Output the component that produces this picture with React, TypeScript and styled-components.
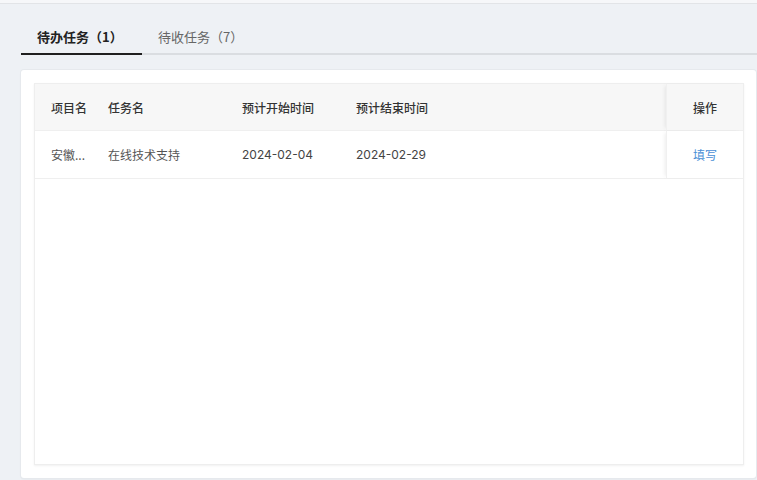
import React from "react";
import styled, { createGlobalStyle } from "styled-components";

const Global = createGlobalStyle`
  html, body { margin: 0; padding: 0; background: #eef1f5; }
  body { font-family: "Noto Sans CJK SC", "Noto Sans", sans-serif; }
  * { box-sizing: border-box; }
`;

const Page = styled.div`
  width: 757px;
  height: 480px;
  background: #eef1f5;
  display: flex;
  flex-direction: column;
  overflow: hidden;
`;

const TopBar = styled.div`
  height: 4px;
  background: #f6f7f9;
  border-bottom: 1px solid #e2e4e7;
  flex-shrink: 0;
`;

const Body = styled.div`
  flex: 1;
  display: flex;
  flex-direction: column;
  padding: 13px 0 2px 21px;
`;

const Tabs = styled.div`
  display: flex;
  border-bottom: 2px solid #dadde1;
  height: 38px;
`;

const Tab = styled.div<{ $active?: boolean }>`
  padding: 0 16px;
  margin-bottom: -2px;
  min-width: ${(p) => (p.$active ? "121px" : "auto")};
  display: flex;
  align-items: center;
  padding-top: 2px;
  font-size: 13px;
  font-weight: ${(p) => (p.$active ? 700 : 400)};
  color: ${(p) => (p.$active ? "#222" : "#666")};
  border-bottom: 2px solid ${(p) => (p.$active ? "#1f1f1f" : "transparent")};
`;

const Card = styled.div`
  margin-top: 15px;
  margin-right: 1px;
  flex: 1;
  background: #fff;
  border-radius: 3px;
  box-shadow: 0 0 0 1px #e6e9ed, 0 1px 2px rgba(0, 0, 0, 0.08);
  padding: 13px 12px 13px 13px;
  display: flex;
`;

const TableWrap = styled.div`
  flex: 1;
  border: 1px solid #eeeeee;
  box-shadow: 0 1px 2px rgba(0, 0, 0, 0.06);
  display: flex;
  flex-direction: column;
`;

const Row = styled.div<{ $head?: boolean }>`
  display: grid;
  grid-template-columns: 57px 134px 114px 1fr 77px;
  height: ${(p) => (p.$head ? "47px" : "48px")};
  background: ${(p) => (p.$head ? "#f7f7f7" : "#fff")};
  border-bottom: 1px solid #efefef;
`;

const Cell = styled.div<{ $head?: boolean; $fixed?: boolean; $num?: boolean }>`
  display: flex;
  align-items: center;
  justify-content: ${(p) => (p.$fixed ? "center" : "flex-start")};
  padding-left: ${(p) => (p.$fixed ? "0" : "16px")};
  font-size: 12px;
  font-weight: ${(p) => (p.$head ? 500 : 400)};
  color: ${(p) => (p.$head ? "#333" : "#555")};
  white-space: nowrap;
  overflow: hidden;
  ${(p) => (p.$num ? `font-family: Inter, "Noto Sans", sans-serif; color: #444;` : "")}
  ${(p) =>
    p.$fixed
      ? `box-shadow: -3px 0 4px -2px rgba(0,0,0,0.08); border-left: 1px solid #f0f0f0; background: ${p.$head ? "#f7f7f7" : "#fff"};`
      : ""}
`;

const Link = styled.span`
  color: #4a8fd6;
`;

export default function App() {
  return (
    <Page>
      <Global />
      <TopBar />
      <Body>
        <Tabs>
          <Tab $active>待办任务（1）</Tab>
          <Tab>待收任务（7）</Tab>
        </Tabs>
        <Card>
          <TableWrap>
            <Row $head>
              <Cell $head>项目名</Cell>
              <Cell $head>任务名</Cell>
              <Cell $head>预计开始时间</Cell>
              <Cell $head>预计结束时间</Cell>
              <Cell $head $fixed>操作</Cell>
            </Row>
            <Row>
              <Cell>安徽...</Cell>
              <Cell>在线技术支持</Cell>
              <Cell $num>2024-02-04</Cell>
              <Cell $num>2024-02-29</Cell>
              <Cell $fixed>
                <Link>填写</Link>
              </Cell>
            </Row>
          </TableWrap>
        </Card>
      </Body>
    </Page>
  );
}
